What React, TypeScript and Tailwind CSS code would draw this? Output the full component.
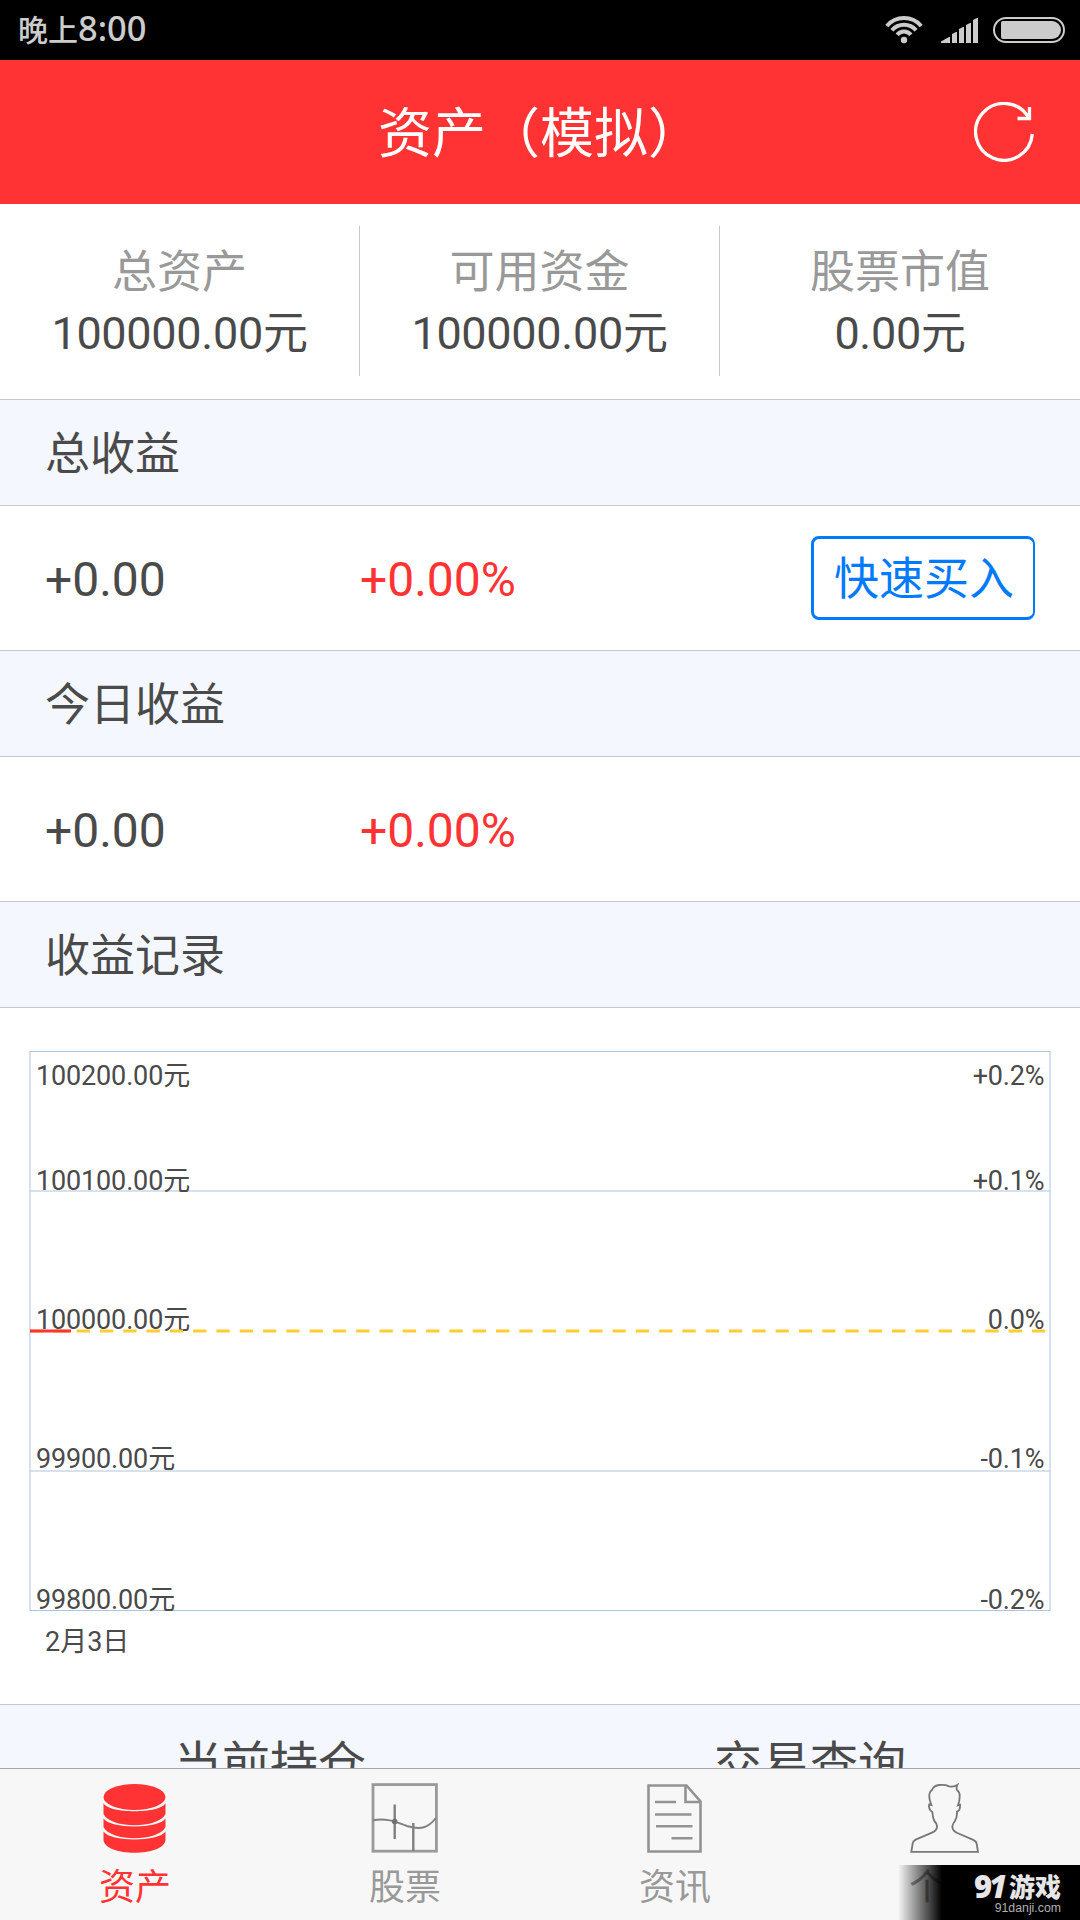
import React, { useState } from 'react';

const stats = [
    { label: '总资产', value: '100000.00元' },
    { label: '可用资金', value: '100000.00元' },
    { label: '股票市值', value: '0.00元' },
];

const levels = [
    { money: '100200.00元', rate: '+0.2%', baseline: 1085 },
    { money: '100100.00元', rate: '+0.1%', baseline: 1190 },
    { money: '100000.00元', rate: '0.0%', baseline: 1329 },
    { money: '99900.00元', rate: '-0.1%', baseline: 1468 },
    { money: '99800.00元', rate: '-0.2%', baseline: 1609 },
];

const StatusBar: React.FC = () => (
    <div className="flex h-[60px] shrink-0 items-center justify-between bg-black pr-[15px] pl-[18px] text-[#cccccc]">
        <div className="flex items-baseline pb-[2px] font-['Noto_Sans','Noto_Sans_CJK_SC',sans-serif] font-medium">
            <span className="text-[30px] leading-[60px]">晚上</span>
            <span className="text-[34.5px] leading-[60px]">8:00</span>
        </div>
        <div className="flex items-center">
            <svg width="40" height="30" viewBox="884 15 40 30" fill="none" stroke="currentColor" strokeWidth="4">
                <path d="M886.8 26 A22.5 22.5 0 0 1 921.2 26" />
                <path d="M891.9 30.3 A15.8 15.8 0 0 1 916.1 30.3" />
                <path d="M897.1 34.7 A9 9 0 0 1 910.9 34.7" />
                <circle cx="904" cy="40" r="3.2" fill="currentColor" stroke="none" />
            </svg>
            <svg className="ml-[16px]" width="40" height="30" viewBox="940 15 40 30" fill="currentColor">
                <path d="M941 43V41.5L949 37H950V43Z" />
                <path d="M952 43V34L956 32H957V43Z" />
                <path d="M959 43V29L963 27H964V43Z" />
                <path d="M966 43V25L970 23H971V43Z" />
                <path d="M973 43V20L977 18H978V43Z" />
            </svg>
            <svg className="ml-[13px]" width="72" height="30" viewBox="993 15 72 30" fill="none">
                <rect x="994" y="18" width="70" height="24" rx="12" stroke="currentColor" strokeWidth="2" />
                <path d="M1003 21H1052A9 9 0 0 1 1052 39H1003Q1001 39 1001 37V23Q1001 21 1003 21Z" fill="currentColor" />
            </svg>
        </div>
    </div>
);

const SectionTitle: React.FC<{ title: string }> = ({ title }) => (
    <h2 className="flex h-[107px] shrink-0 items-center border-y border-[#c8c7cc] bg-[#f4f8fe] pt-[4px] pl-[45px] text-[45px] leading-[60px]">
        {title}
    </h2>
);

const ProfitRow: React.FC<{ children?: React.ReactNode }> = ({ children }) => (
    <div className="flex h-[144px] shrink-0 items-center pr-[45px] pl-[45px] text-[48px]">
        <span className="w-[315px] pt-[4px]">+0.00</span>
        <span className="pt-[4px] text-[#ff3333]">+0.00%</span>
        {children}
    </div>
);

const ProfitChart: React.FC = () => (
    <svg className="block shrink-0" width="1080" height="696" viewBox="0 1008 1080 696" fontSize="27" fill="#4a4a4a">
        <g stroke="#b0c4de" strokeWidth="1" fill="none">
            <path d="M29.5 1051.5H1050.5M29.5 1610.5H1050.5" />
            <path d="M30 1051V1611M1050 1051V1611M30 1191H1050M30 1471H1050" />
        </g>
        <g className="tracking-[-0.15px]">
            {levels.map((level) => (
                <g key={level.money}>
                    <text x="36" y={level.baseline + 0.4}>{level.money}</text>
                    <text x="1044.5" y={level.baseline + 0.4} textAnchor="end">{level.rate}</text>
                </g>
            ))}
        </g>
        <path d="M30 1331H1047" stroke="#ffcc33" strokeWidth="3" strokeDasharray="13.3 10" />
        <path d="M30 1331H71" stroke="#ff3333" strokeWidth="3" />
        <text x="45" y="1651">2月3日</text>
    </svg>
);

const AssetIcon = () => (
    <svg width="64" height="72" viewBox="103 1783 64 72" fill="#ff3333">
        <ellipse cx="134.5" cy="1797" rx="31" ry="13" />
        <path d="M103.5 1803C108 1814 161 1814 165.5 1803V1814C158 1829 111 1829 103.5 1814Z" />
        <path d="M103.5 1818.5C110 1829 159 1829 165.5 1818.5V1827C158 1842 111 1842 103.5 1827Z" />
        <path d="M103.5 1831.5C110 1842 159 1842 165.5 1831.5V1840C164 1857 105 1857 103.5 1840Z" />
    </svg>
);

const StockIcon = () => (
    <svg width="68" height="72" viewBox="371 1783 68 72" fill="none" stroke="#999999" strokeWidth="2.8">
        <rect x="373" y="1784.6" width="63.4" height="66.6" />
        <path d="M373 1820.2C388 1818 396 1822 407 1826C421 1830 428 1828 436 1818" stroke="#808080" strokeWidth="2" />
        <path d="M394.7 1804.5V1839M413.3 1823V1851" stroke="#808080" strokeWidth="2.4" />
        <circle cx="394.7" cy="1821.5" r="2.8" fill="#707070" stroke="none" />
    </svg>
);

const NewsIcon = () => (
    <svg width="56" height="72" viewBox="647 1783 56 72" fill="none" stroke="#939393" strokeWidth="2.6">
        <path d="M648.5 1785.5H686.5L700.5 1801.5V1851.5H648.5Z" />
        <path d="M685.5 1786V1802H700.5" />
        <path d="M655 1802H676M655 1814.5H691.5M656 1826.3H692.5M671.5 1838.3H692.5" />
    </svg>
);

const ProfileIcon = () => (
    <svg width="70" height="72" viewBox="60 39 210 216" fill="none" stroke="#777777" strokeWidth="5.5">
        <path d="M64 245.500L68 220Q70 213 77 209L126 188Q142 181 141 168Q140 160 133 153Q128 142 127 126Q121 123 118 115Q116 106 118 103L124 105Q113 77 121 65L126 60Q132 46 148 45Q166 44 178 49Q192 52 202 45Q198 54 201 60Q210 66 209 80Q209 92 204 106L210 104Q211 113 208 119Q205 124 201 125Q202 140 195 153Q188 161 187 169Q187 183 202 189L248 209Q259 214 260 221L264 245.500Z" />
    </svg>
);

const tabs = [
    { name: '资产', icon: <AssetIcon /> },
    { name: '股票', icon: <StockIcon /> },
    { name: '资讯', icon: <NewsIcon /> },
    { name: '个人', icon: <ProfileIcon /> },
];

const App: React.FC = () => {
    const [active, setActive] = useState(0);

    return (
        <div className="relative flex h-[1920px] w-[1080px] flex-col overflow-hidden bg-white font-['Roboto','Noto_Sans_CJK_SC',sans-serif] text-[#4a4a4a]">
            <StatusBar />

            <header className="relative flex h-[144px] shrink-0 items-center justify-center bg-[#ff3333] pt-[5px] text-white">
                <h1 className="text-[54px] leading-[72px]">资产（模拟）</h1>
                <button className="absolute top-[42px] right-[46px]" aria-label="refresh">
                    <svg width="60" height="60" viewBox="974 102 60 60" fill="none" stroke="#ffffff" strokeWidth="3.3">
                        <path d="M1032.3 134A28.4 28.4 0 1 1 1028.500 117.500" />
                        <path d="M1029.500 107V118.500H1017.500" />
                    </svg>
                </button>
            </header>

            <div className="grid h-[195px] shrink-0 grid-cols-3 py-[22px]">
                {stats.map((stat, index) => (
                    <div
                        key={stat.label}
                        className={`flex h-[150px] flex-col items-center text-[45px] ${index < 2 ? 'border-r border-[#c8c7cc]' : ''}`}
                    >
                        <span className="mt-[16px] leading-[62px] text-[#999999]">{stat.label}</span>
                        <span className="-mt-px leading-[62px] tracking-[-0.3px]">{stat.value}</span>
                    </div>
                ))}
            </div>

            <SectionTitle title="总收益" />
            <ProfitRow>
                <button className="ml-auto flex h-[84px] w-[224px] items-center justify-center rounded-lg border-3 border-r-2 border-[#007aff] pt-[4px] pl-px text-[45px] leading-[60px] text-[#007aff]">
                    快速买入
                </button>
            </ProfitRow>
            <SectionTitle title="今日收益" />
            <ProfitRow />
            <SectionTitle title="收益记录" />
            <ProfitChart />

            <div className="grid h-[64px] shrink-0 grid-cols-2 overflow-hidden border-t border-[#c8c7cc] bg-[#f4f8fe] pt-[28px] text-center text-[48px] leading-[64px]">
                <span>当前持仓</span>
                <span>交易查询</span>
            </div>

            <nav className="grid h-[152px] shrink-0 grid-cols-4 border-t border-[#a6a6aa] bg-[#f7f7f7]">
                {tabs.map((tab, index) => (
                    <button
                        key={tab.name}
                        onClick={() => setActive(index)}
                        className={`flex flex-col items-center pt-[14px] text-[36px] leading-[48px] ${index === active ? 'text-[#ff3333]' : 'text-[#999999]'}`}
                    >
                        {tab.icon}
                        <span className="mt-[9px]">{tab.name}</span>
                    </button>
                ))}
            </nav>

            {/* site badge in the corner */}
            <div className="absolute right-0 bottom-0 flex h-[55px] w-[182px] flex-col items-end bg-linear-to-r from-transparent to-black to-[44px] pt-[7px] pr-[19px] text-[#e6e6e6]">
                <div className="flex h-[28px] items-center">
                    <span className="w-[15px] font-['Noto_Sans'] text-[31px] leading-[28px] font-black">9</span>
                    <span className="mr-[2px] w-[18px] font-['Noto_Sans'] text-[31px] leading-[28px] font-black italic">1</span>
                    <span className="font-['Noto_Sans_CJK_SC'] text-[26px] leading-[28px] font-black">游戏</span>
                </div>
                <span className="font-['Liberation_Sans'] text-[12.3px] leading-[16px] text-[#b0b0b0]">91danji.com</span>
            </div>
        </div>
    );
};

export default App;
